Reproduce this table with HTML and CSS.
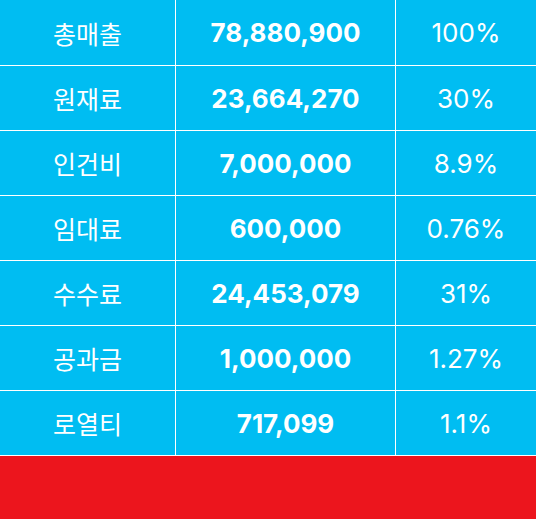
FILE: index.html
```html
<!DOCTYPE html>
<html lang="ko">
<head>
<meta charset="utf-8">
<link rel="stylesheet" href="styles.css">
</head>
<body>
<div class="table">
  <div class="cell label">총매출</div><div class="cell amount">78,880,900</div><div class="cell pct">100%</div>
  <div class="cell label">원재료</div><div class="cell amount">23,664,270</div><div class="cell pct">30%</div>
  <div class="cell label">인건비</div><div class="cell amount">7,000,000</div><div class="cell pct">8.9%</div>
  <div class="cell label">임대료</div><div class="cell amount">600,000</div><div class="cell pct">0.76%</div>
  <div class="cell label">수수료</div><div class="cell amount">24,453,079</div><div class="cell pct">31%</div>
  <div class="cell label">공과금</div><div class="cell amount">1,000,000</div><div class="cell pct">1.27%</div>
  <div class="cell label">로열티</div><div class="cell amount">717,099</div><div class="cell pct">1.1%</div>
</div>
<div class="total"></div>
</body>
</html>
```
FILE: styles.css
```css
html, body {
  margin: 0;
  padding: 0;
  background: #ffffff;
}
body {
  width: 536px;
  font-family: Inter, "Noto Sans CJK KR", sans-serif;
  color: #ffffff;
}
.table {
  display: grid;
  grid-template-columns: 175px 219px 1fr;
  grid-template-rows: 65px;
  grid-auto-rows: 64px;
  column-gap: 1px;
  row-gap: 1px;
  background: #ffffff;
}
.cell {
  background: #00bdf2;
  display: flex;
  align-items: center;
  justify-content: center;
}
.label {
  font-family: "Noto Sans CJK KR", sans-serif;
  font-size: 25px;
  font-weight: 400;
}
.amount {
  font-size: 26px;
  font-weight: 700;
}
.pct {
  font-size: 26px;
  font-weight: 400;
}
.total {
  margin-top: 1px;
  height: 63px;
  background: #ec151d;
}
```
